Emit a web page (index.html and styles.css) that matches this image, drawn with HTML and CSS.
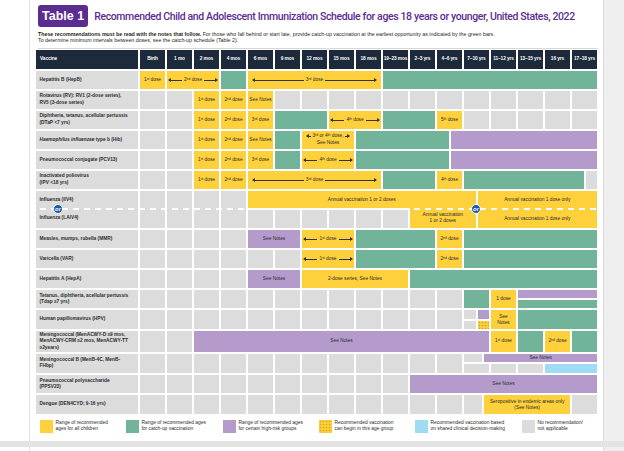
FILE: index.html
```html
<!DOCTYPE html>
<html lang="en">
<head>
<meta charset="utf-8">
<title>Table 1 – Immunization Schedule</title>
<link rel="stylesheet" href="styles.css">
</head>
<body>
<div class="viewer">
  <div class="gutter"></div>
  <div class="sheet">
    <div class="title-row">
      <div class="tag">Table 1</div>
      <h1 class="title">Recommended Child and Adolescent Immunization Schedule for ages 18 years or younger, United States, 2022</h1>
    </div>
    <p class="intro"><b>These recommendations must be read with the notes that follow.</b> For those who fall behind or start late, provide catch-up vaccination at the earliest opportunity as indicated by the green bars.<br>To determine minimum intervals between doses, see the catch-up schedule (Table 2).</p>
    <div class="rule"></div>
    <div class="table">
      <div class="row head">
        <div class="name"><span>Vaccine</span></div>
        <div class="s4"><span>Birth</span></div><div class="s4"><span>1 mo</span></div><div class="s4"><span>2 mos</span></div><div class="s4"><span>4 mos</span></div><div class="s4"><span>6 mos</span></div><div class="s4"><span>9 mos</span></div><div class="s4"><span>12 mos</span></div><div class="s4"><span>15 mos</span></div><div class="s4"><span>18 mos</span></div><div class="s4"><span>19–23 mos</span></div><div class="s4"><span>2–3 yrs</span></div><div class="s4"><span>4–6 yrs</span></div><div class="s4"><span>7–10 yrs</span></div><div class="s4"><span>11–12 yrs</span></div><div class="s4"><span>13–15 yrs</span></div><div class="s4"><span>16 yrs</span></div><div class="s4"><span>17–18 yrs</span></div>
      </div>

      <div class="row">
        <div class="name"><span>Hepatitis B (HepB)</span></div>
        <div class="y s4"><span>1<sup>st</sup> dose</span></div>
        <div class="y s8 arr"><i class="al"></i><span>2<sup>nd</sup> dose</span><i class="ar"></i></div>
        <div class="gr s4"></div>
        <div class="y s20 arr wide"><i class="al"></i><span>3<sup>rd</sup> dose</span><i class="ar"></i></div>
        <div class="gr s32"></div>
      </div>

      <div class="row">
        <div class="name"><span>Rotavirus (RV): RV1 (2-dose series),<br>RV5 (3-dose series)</span></div>
        <div class="g s4"></div><div class="g s4"></div>
        <div class="y s4"><span>1<sup>st</sup> dose</span></div>
        <div class="y s4"><span>2<sup>nd</sup> dose</span></div>
        <div class="y s4"><span>See Notes</span></div>
        <div class="g s4"></div><div class="g s4"></div><div class="g s4"></div><div class="g s4"></div><div class="g s4"></div><div class="g s4"></div><div class="g s4"></div><div class="g s4"></div><div class="g s4"></div><div class="g s4"></div><div class="g s4"></div><div class="g s4"></div>
      </div>

      <div class="row">
        <div class="name"><span>Diphtheria, tetanus, acellular pertussis<br>(DTaP &lt;7 yrs)</span></div>
        <div class="g s4"></div><div class="g s4"></div>
        <div class="y s4"><span>1<sup>st</sup> dose</span></div>
        <div class="y s4"><span>2<sup>nd</sup> dose</span></div>
        <div class="y s4"><span>3<sup>rd</sup> dose</span></div>
        <div class="gr s8"></div>
        <div class="y s8 arr"><i class="al"></i><span>4<sup>th</sup> dose</span><i class="ar"></i></div>
        <div class="gr s8"></div>
        <div class="y s4"><span>5<sup>th</sup> dose</span></div>
        <div class="g s4"></div><div class="g s4"></div><div class="g s4"></div><div class="g s4"></div><div class="g s4"></div>
      </div>

      <div class="row">
        <div class="name"><span><i>Haemophilus influenzae</i> type b (Hib)</span></div>
        <div class="g s4"></div><div class="g s4"></div>
        <div class="y s4"><span>1<sup>st</sup> dose</span></div>
        <div class="y s4"><span>2<sup>nd</sup> dose</span></div>
        <div class="y s4"><span>See Notes</span></div>
        <div class="gr s4"></div>
        <div class="y s8 stack"><div class="arr mini"><i class="al"></i><span>3<sup>rd</sup> or 4<sup>th</sup> dose,</span><i class="ar"></i></div><span>See Notes</span></div>
        <div class="gr s14"></div>
        <div class="p s22"></div>
      </div>

      <div class="row">
        <div class="name"><span>Pneumococcal conjugate (PCV13)</span></div>
        <div class="g s4"></div><div class="g s4"></div>
        <div class="y s4"><span>1<sup>st</sup> dose</span></div>
        <div class="y s4"><span>2<sup>nd</sup> dose</span></div>
        <div class="y s4"><span>3<sup>rd</sup> dose</span></div>
        <div class="gr s4"></div>
        <div class="y s8 arr"><i class="al"></i><span>4<sup>th</sup> dose</span><i class="ar"></i></div>
        <div class="gr s14"></div>
        <div class="p s22"></div>
      </div>

      <div class="row">
        <div class="name"><span>Inactivated poliovirus<br>(IPV &lt;18 yrs)</span></div>
        <div class="g s4"></div><div class="g s4"></div>
        <div class="y s4"><span>1<sup>st</sup> dose</span></div>
        <div class="y s4"><span>2<sup>nd</sup> dose</span></div>
        <div class="y s20 arr wide"><i class="al"></i><span>3<sup>rd</sup> dose</span><i class="ar"></i></div>
        <div class="gr s8"></div>
        <div class="y s4"><span>4<sup>th</sup> dose</span></div>
        <div class="gr s18"></div>
        <div class="g s2"></div>
      </div>

      <div class="row split flu">
        <div class="name rr pair"><span>Influenza (IIV4)</span><span>Influenza (LAIV4)</span></div>
        <div class="g s4 rr"></div><div class="g s4 rr"></div><div class="g s4 rr"></div><div class="g s4 rr"></div>
        <div class="y s34 r1"><span>Annual vaccination 1 or 2 doses</span></div>
        <div class="g s4 r2"></div><div class="g s4 r2"></div><div class="g s4 r2"></div><div class="g s4 r2"></div><div class="g s4 r2"></div><div class="g s4 r2"></div>
        <div class="y s10 r2 join"><span>Annual vaccination<br>1 or 2 doses</span></div>
        <div class="y s18 rr pair mid"><span>Annual vaccination 1 dose only</span><span>Annual vaccination 1 dose only</span></div>
        <div class="dash"></div>
        <div class="or or-name"><span>or</span></div>
        <div class="or or-cells"><span>or</span></div>
      </div>

      <div class="row">
        <div class="name"><span>Measles, mumps, rubella (MMR)</span></div>
        <div class="g s4"></div><div class="g s4"></div><div class="g s4"></div><div class="g s4"></div>
        <div class="p s8"><span>See Notes</span></div>
        <div class="y s8 arr"><i class="al"></i><span>1<sup>st</sup> dose</span><i class="ar"></i></div>
        <div class="gr s12"></div>
        <div class="y s4"><span>2<sup>nd</sup> dose</span></div>
        <div class="gr s20"></div>
      </div>

      <div class="row">
        <div class="name"><span>Varicella (VAR)</span></div>
        <div class="g s4"></div><div class="g s4"></div><div class="g s4"></div><div class="g s4"></div><div class="g s4"></div><div class="g s4"></div>
        <div class="y s8 arr"><i class="al"></i><span>1<sup>st</sup> dose</span><i class="ar"></i></div>
        <div class="gr s12"></div>
        <div class="y s4"><span>2<sup>nd</sup> dose</span></div>
        <div class="gr s20"></div>
      </div>

      <div class="row">
        <div class="name"><span>Hepatitis A (HepA)</span></div>
        <div class="g s4"></div><div class="g s4"></div><div class="g s4"></div><div class="g s4"></div>
        <div class="p s8"><span>See Notes</span></div>
        <div class="y s16"><span>2-dose series, See Notes</span></div>
        <div class="gr s28"></div>
      </div>

      <div class="row split tdap">
        <div class="name rr"><span>Tetanus, diphtheria, acellular pertussis<br>(Tdap ≥7 yrs)</span></div>
        <div class="g s4 rr"></div><div class="g s4 rr"></div><div class="g s4 rr"></div><div class="g s4 rr"></div><div class="g s4 rr"></div><div class="g s4 rr"></div><div class="g s4 rr"></div><div class="g s4 rr"></div><div class="g s4 rr"></div><div class="g s4 rr"></div><div class="g s4 rr"></div><div class="g s4 rr"></div>
        <div class="gr s4 rr"></div>
        <div class="y s4 rr"><span>1 dose</span></div>
        <div class="p s12 r1"></div>
        <div class="gr s12 r2"></div>
      </div>

      <div class="row split hpv">
        <div class="name rr"><span>Human papillomavirus (HPV)</span></div>
        <div class="g s4 rr"></div><div class="g s4 rr"></div><div class="g s4 rr"></div><div class="g s4 rr"></div><div class="g s4 rr"></div><div class="g s4 rr"></div><div class="g s4 rr"></div><div class="g s4 rr"></div><div class="g s4 rr"></div><div class="g s4 rr"></div><div class="g s4 rr"></div><div class="g s4 rr"></div>
        <div class="g s2 r1"></div>
        <div class="p s2 r1"></div>
        <div class="g s2 r2"></div>
        <div class="dot s2 r2"></div>
        <div class="y s4 rr"><span>See<br>Notes</span></div>
        <div class="gr s12 rr"></div>
      </div>

      <div class="row acwy">
        <div class="name"><span>Meningococcal (MenACWY-D ≥9 mos,<br>MenACWY-CRM ≥2 mos, MenACWY-TT<br>≥2years)</span></div>
        <div class="g s4"></div><div class="g s4"></div>
        <div class="p s44"><span>See Notes</span></div>
        <div class="y s4"><span>1<sup>st</sup> dose</span></div>
        <div class="gr s4"></div>
        <div class="y s4"><span>2<sup>nd</sup> dose</span></div>
        <div class="gr s4"></div>
      </div>

      <div class="row split menb">
        <div class="name rr"><span>Meningococcal B (MenB-4C, MenB-<br>FHbp)</span></div>
        <div class="g s4 rr"></div><div class="g s4 rr"></div><div class="g s4 rr"></div><div class="g s4 rr"></div><div class="g s4 rr"></div><div class="g s4 rr"></div><div class="g s4 rr"></div><div class="g s4 rr"></div><div class="g s4 rr"></div><div class="g s4 rr"></div><div class="g s4 rr"></div><div class="g s4 rr"></div>
        <div class="g s3 r1"></div>
        <div class="p s17 r1"><span>See Notes</span></div>
        <div class="g s4 r2"></div>
        <div class="g s4 r2"></div>
        <div class="g s4 r2"></div>
        <div class="b s8 r2"></div>
      </div>

      <div class="row ppsv">
        <div class="name"><span>Pneumococcal polysaccharide<br>(PPSV23)</span></div>
        <div class="g s4"></div><div class="g s4"></div><div class="g s4"></div><div class="g s4"></div><div class="g s4"></div><div class="g s4"></div><div class="g s4"></div><div class="g s4"></div><div class="g s4"></div><div class="g s4"></div>
        <div class="p s28"><span>See Notes</span></div>
      </div>

      <div class="row dengue">
        <div class="name"><span>Dengue (DEN4CYD; 9-16 yrs)</span></div>
        <div class="g s4"></div><div class="g s4"></div><div class="g s4"></div><div class="g s4"></div><div class="g s4"></div><div class="g s4"></div><div class="g s4"></div><div class="g s4"></div><div class="g s4"></div><div class="g s4"></div><div class="g s4"></div><div class="g s4"></div>
        <div class="g s3"></div>
        <div class="y s13"><span>Seropositive in endemic areas only<br>(See Notes)</span></div>
        <div class="g s4"></div>
      </div>
    </div>

    <div class="legend">
      <div class="li"><i class="sw y"></i><span>Range of recommended<br>ages for all children</span></div>
      <div class="li"><i class="sw gr"></i><span>Range of recommended ages<br>for catch-up vaccination</span></div>
      <div class="li"><i class="sw p"></i><span>Range of recommended ages<br>for certain high-risk groups</span></div>
      <div class="li"><i class="sw dot"></i><span>Recommended vaccination<br>can begin in this age group</span></div>
      <div class="li"><i class="sw b"></i><span>Recommended vaccination based<br>on shared clinical decision-making</span></div>
      <div class="li"><i class="sw g"></i><span>No recommendation/<br>not applicable</span></div>
    </div>
  </div>
  <div class="side"></div>
</div>
<div class="band"></div>
<div class="below">
  <div class="gutter"></div>
  <div class="sheet-next"></div>
  <div class="side"></div>
</div>
</body>
</html>
```

FILE: styles.css
```css
* { box-sizing: border-box; }
html, body { margin: 0; padding: 0; }
body {
  width: 624px;
  height: 451px;
  overflow: hidden;
  background: #fff;
  font-family: "Liberation Sans", Arial, sans-serif;
  color: #231f20;
}

.viewer {
  display: grid;
  grid-template-columns: 30px 573px 21px;
  height: 441px;
}
.below {
  display: grid;
  grid-template-columns: 30px 573px 21px;
  height: 4px;
}
.gutter { background: #fff; border-right: 1px solid #e3e3e3; }
.side { background: #efefef; border-left: 1px solid #dadada; }
.sheet { background: #fff; padding: 5px 0 0 6px; }
.sheet-next { background: #fff; }
.band { height: 6px; background: #e4e4e4; }

/* title */
.title-row {
  display: flex;
  align-items: center;
  gap: 6px;
  height: 22px;
  margin-left: 2px;
}
.tag {
  height: 22px;
  padding: 0 4px;
  display: flex;
  align-items: center;
  background: #5c2d91;
  color: #fff;
  font-weight: bold;
  font-size: 12.5px;
  border-radius: 3px;
}
.title {
  margin: 0;
  font-family: Roboto, "Liberation Sans", sans-serif;
  font-weight: 500;
  font-size: 10.5px;
  letter-spacing: -0.37px;
  color: #5c2d91;
  white-space: nowrap;
}
.intro {
  margin: 5px 0 0 2px;
  font-size: 5.3px;
  line-height: 5.8px;
  color: #231f20;
}
.rule {
  height: 1px;
  width: 559px;
  margin: 4px 0 0 2px;
  background: #d8d8d8;
}

/* table */
.table {
  margin-top: 1.4px;
  width: 561px;
  display: flex;
  flex-direction: column;
  gap: 2px;
}
.row {
  position: relative;
  display: grid;
  grid-template-columns: 102px repeat(68, 4.75px);
  column-gap: 2px;
  height: 18px;
}
.row.head { height: 19px; }
.row.split { grid-template-rows: 1fr 1fr; row-gap: 2px; }
.row.flu { height: 37px; }
.row.tdap, .row.hpv, .row.ppsv, .row.dengue { height: 18.5px; }
.row.acwy { height: 21px; }
.row.menb { height: 19px; }

.row > div {
  display: flex;
  align-items: center;
  justify-content: center;
  text-align: center;
  font-size: 4.8px;
  line-height: 6px;
  color: #2a2a2a;
  white-space: nowrap;
  min-width: 0;
}
.row > .name {
  justify-content: flex-start;
  text-align: left;
  padding-left: 3.5px;
  background: #dcdcdd;
  font-weight: bold;
  line-height: 6.6px;
  color: #2b2b2b;
}
.head > div {
  background: #1c2a3b;
  color: #fff;
  font-weight: bold;
  letter-spacing: -0.1px;
}
.row.head > .name { background: #1c2a3b; color: #fff; padding-left: 4px; }

sup { font-size: 70%; vertical-align: 0.45em; line-height: 0; }

/* cell colours */
.g { background: #dcdcdd; }
.y { background: #fed03c; }
.gr { background: #72b49a; }
.p { background: #b59bcc; }
.b { background: #9fdcf3; }
.dot {
  background-color: #fed03c;
  background-image: radial-gradient(circle, #d9a516 0.7px, transparent 1.1px);
  background-size: 3px 3px;
}

/* spans (quarter-column tracks) */
.s1 { grid-column: span 1; }
.s2 { grid-column: span 2; }
.s3 { grid-column: span 3; }
.s4 { grid-column: span 4; }
.s8 { grid-column: span 8; }
.s10 { grid-column: span 10; }
.s12 { grid-column: span 12; }
.s13 { grid-column: span 13; }
.s14 { grid-column: span 14; }
.s16 { grid-column: span 16; }
.s17 { grid-column: span 17; }
.s18 { grid-column: span 18; }
.s20 { grid-column: span 20; }
.s22 { grid-column: span 22; }
.s28 { grid-column: span 28; }
.s32 { grid-column: span 32; }
.s34 { grid-column: span 34; }
.s44 { grid-column: span 44; }
.r1 { grid-row: 1; }
.r2 { grid-row: 2; }
.rr { grid-row: 1 / 3; }

/* arrows */
.row > .arr, .arr {
  display: flex;
  align-items: center;
  gap: 2px;
  padding: 0 2px;
}
.row > .arr.wide { padding: 0 5px; }
.al, .ar {
  flex: 1;
  height: 0.8px;
  background: #333;
  position: relative;
}
.al::before, .ar::after {
  content: "";
  position: absolute;
  top: -1.6px;
  border-style: solid;
}
.al::before {
  left: -1px;
  border-width: 2px 3px 2px 0;
  border-color: transparent #333 transparent transparent;
}
.ar::after {
  right: -1px;
  border-width: 2px 0 2px 3px;
  border-color: transparent transparent transparent #333;
}
.arr.mini { gap: 1px; padding: 0; }
.arr.mini .al, .arr.mini .ar { flex: 0 0 4px; }
.row > .stack { flex-direction: column; gap: 1px; }

/* influenza */
.row > .pair {
  flex-direction: column;
  justify-content: space-around;
  align-items: flex-start;
}
.row > .pair.mid { align-items: center; }
.row > .join { margin-top: -2px; line-height: 6.7px; }
.dash {
  position: absolute;
  left: 4px;
  right: 0;
  top: 17.5px;
  height: 2px;
  background: repeating-linear-gradient(90deg, #fff 0 6px, transparent 6px 11px);
  z-index: 2;
}
.row > .or {
  position: absolute;
  top: 13px;
  width: 10px;
  height: 10px;
  border-radius: 50%;
  background: #1b5aa7;
  border: 1px solid #fff;
  color: #fff;
  font-style: italic;
  font-weight: bold;
  font-size: 5.8px;
  line-height: 8px;
  z-index: 3;
}
.or-name { left: 17px; }
.or-cells { left: 435px; }

/* legend */
.legend {
  margin: 6px 0 0 4px;
  display: grid;
  grid-template-columns: 86px 97px 96px 96px 107px 1fr;
}
.li {
  display: flex;
  align-items: center;
  gap: 2.5px;
  font-size: 4.9px;
  line-height: 6.3px;
  color: #2a2a2a;
}
.sw {
  flex: 0 0 13px;
  height: 13px;
}
```
